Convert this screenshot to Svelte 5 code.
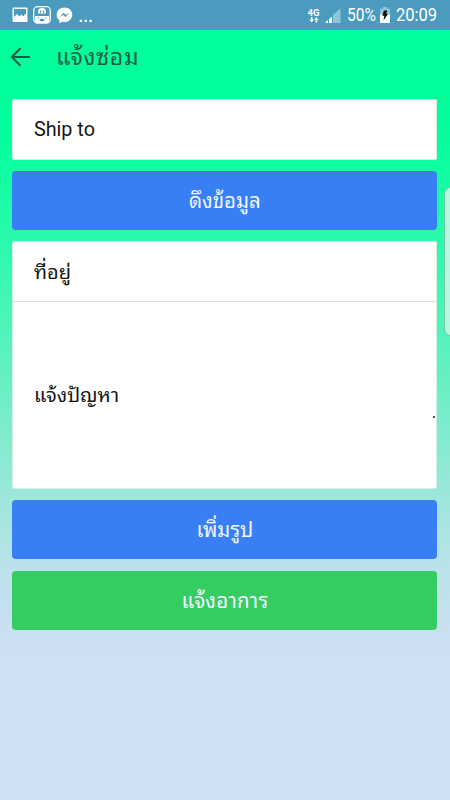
<script>
	let title = "แจ้งซ่อม"
	let shipTo = "Ship to"
	let address = "ที่อยู่"
	let problem = "แจ้งปัญหา"
</script>


<div class="screen">

	<!-- status bar -->
	<div class="status">
		<div class="notifications">
			<svg width="16" height="16" viewBox="0 0 16 16">
				<path fill="#fff" fill-rule="evenodd" d="M1.500 .5h13a1 1 0 0 1 1 1v12.500a1 1 0 0 1-1 1h-13a1 1 0 0 1-1-1V1.500a1 1 0 0 1 1-1zM2 2v8l3-3 2.500 2.500 2-2 1.500 2 3-3V2z"/>
			</svg>
			<svg class="mascot" width="18" height="18" viewBox="0 0 18 18">
				<rect x=".7" y=".7" width="16.600" height="16.400" rx="4" fill="none" stroke="#fff" stroke-width="1.300"/>
				<path fill="#fff" d="M5 7.500V6a4 4 0 0 1 8 0v1.500zM2 10h14v4.500c0 1.500-1 2.500-2.500 2.500h-9C3 17 2 16 2 14.500z"/>
				<path fill="none" stroke="#4a9bbd" stroke-width="1.100" d="M7.500 7V4.500M10.500 7V4.500M4.500 12h1.500M12 12h1.500"/>
				<ellipse cx="9" cy="14" rx="2.500" ry="1.300" fill="#4a9bbd"/>
			</svg>
			<svg width="17" height="17" viewBox="0 0 17 17">
				<path fill="#fff" d="M8.500 .5C3.900.5.7 3.700.7 7.800c0 2.300 1 4.200 2.700 5.500v3l2.700-1.500c.8.200 1.600.3 2.400.3 4.500 0 7.800-3.200 7.800-7.300S13 .5 8.500.5z"/>
				<path fill="#4a9bbd" d="M3.700 10l4-4.200 2 2 3.700-2-4 4.200-2-2z"/>
			</svg>
			<svg class="dots" width="14" height="4" viewBox="0 0 14 4">
				<path fill="#fff" d="M.7 .7h2.300V3H.7zM5.600 .7h2.300V3H5.600zM10.500 .7h2.300V3h-2.300z"/>
			</svg>
		</div>
		<div class="system">
			<div class="network">
				<span>4G</span>
				<svg width="10" height="6" viewBox="0 0 10 6">
					<path fill="#fff" d="M1.900 0h1.600v2.500H5L2.700 5.500.4 2.500h1.500zM6.600 5.500h1.600V3h1.500L7.400 0 5.100 3h1.500z"/>
				</svg>
			</div>
			<svg class="signal" width="16" height="15" viewBox="0 0 16 15">
				<path fill="#8fc5da" d="M8 7L15.500 .3V15H8z"/>
				<path fill="#fff" d="M.5 14l2.500-2v3H.5zM4 11.200l3-2.700V15H4z"/>
			</svg>
			<span class="percent">50%</span>
			<svg class="battery" width="10" height="16" viewBox="0 0 10 16">
				<path fill="#8fc4d9" d="M3 0h4v1.500h3V8H0V1.500h3z"/>
				<path fill="#fff" d="M0 7.500h10V16H0z"/>
				<path fill="#111" d="M4 3.500h3.200L6.300 7H8l-4.500 6.500.8-4.700H2.300z"/>
			</svg>
			<span class="time">20:09</span>
		</div>
	</div>

	<!-- toolbar -->
	<header class="toolbar">
		<svg width="20" height="20" viewBox="0 0 20 20">
			<path fill="none" stroke="#145c43" stroke-width="2" d="M20 10H2M10.500 1.200L1.800 10l8.700 8.800"/>
		</svg>
		<h1>{title}</h1>
	</header>

	<main>
		<div class="list">
			<div class="item">{shipTo}</div>
		</div>
		<button class="primary fetch">ดึงข้อมูล</button>
		<div class="list">
			<div class="item thai">{address}</div>
			<div class="item thai problem">
				{problem}
				<i class="caret"></i>
			</div>
		</div>
		<button class="primary">เพิ่มรูป</button>
		<button class="success">แจ้งอาการ</button>
	</main>

	<div class="edge-handle"></div>
</div>


<style>

	:global(body) {
		margin: 0;
	}

	.screen {
		position: relative;

		width: 450px;
		height: 800px;

		overflow: hidden;

		background: linear-gradient(#00ff9a 0, #00ff9a 125px, #26fbab 230px, #55f3bb 340px, #9be7da 493px, #b9e3e9 565px, #cfdff4 655px);

		font-family: Roboto, "Noto Sans Thai Looped", "Noto Looped Thai", Loma, Waree, "Droid Sans Thai", "Noto Sans Thai", "Noto Sans", sans-serif;
	}

	/* status bar */
	.status {
		height: 30px;
		padding: 0 13px 0 12px;

		display: flex;
		align-items: center;
		justify-content: space-between;

		box-sizing: border-box;

		background: #4a9bbd;

		color: #fff;
	}

	.notifications, .system {
		display: flex;
		align-items: center;
	}

	.mascot {
		margin: 0 5px;
	}

	.dots {
		margin: 11px 0 0 6px;
	}

	.network {
		width: 13px;

		display: flex;
		flex-direction: column;
		align-items: center;

		font-size: 9.5px;
		font-weight: 700;
		line-height: 9px;
	}

	.signal {
		margin: 0 6px 0 5px;
	}

	.percent, .time {
		font-size: 19px;
		line-height: 30px;

		transform-origin: left;
	}

	.percent {
		width: 30px;

		transform: scaleX(0.82);
	}

	.battery {
		margin: 0 6px 0 3px;
	}

	.time {
		width: 41px;

		transform: scaleX(0.87);
	}

	/* toolbar */
	.toolbar {
		height: 54px;
		padding: 0 10px;

		display: flex;
		align-items: center;
		gap: 26px;
	}

	h1 {
		margin: 0;
		padding-bottom: 5px;

		color: #235b46;

		font-size: 23px;
		font-weight: 400;
		letter-spacing: 0.6px;
	}

	/* form */
	main {
		padding: 15px 12.6px 0 12.4px;

		display: flex;
		flex-direction: column;
	}

	.list {
		margin-bottom: 11px;

		border: 1px solid #d5eee6;
		border-radius: 2px;

		background: #fff;
	}

	.item {
		height: 59px;
		padding-left: 20.5px;

		display: flex;
		align-items: center;

		box-sizing: border-box;

		color: #151515;

		font-size: 19.8px;
	}

	.thai {
		padding-bottom: 4px;

		font-size: 20px;
	}

	.problem {
		position: relative;

		height: 187px;

		border-top: 1px solid #dedede;
	}

	.caret {
		position: absolute;
		right: 1px;
		top: 114px;

		width: 2px;
		height: 2px;

		background: #555;
	}

	button {
		height: 59px;
		margin: 0 0 12px;
		padding: 0 0 4px;

		border: 0;
		border-radius: 4px;

		color: #f0f6ff;

		font-family: inherit;
		font-size: 20.5px;
	}

	.fetch {
		margin-bottom: 11px;
	}

	.primary {
		background: #387ef5;
	}

	.success {
		background: #35cd61;

		letter-spacing: 0.2px;
	}

	/* edge panel handle */
	.edge-handle {
		position: absolute;
		top: 187px;
		right: -11px;

		width: 15px;
		height: 147px;

		border: 1px solid #70c9a5;
		border-radius: 7px;

		background: #b9f8e0;
	}

</style>
